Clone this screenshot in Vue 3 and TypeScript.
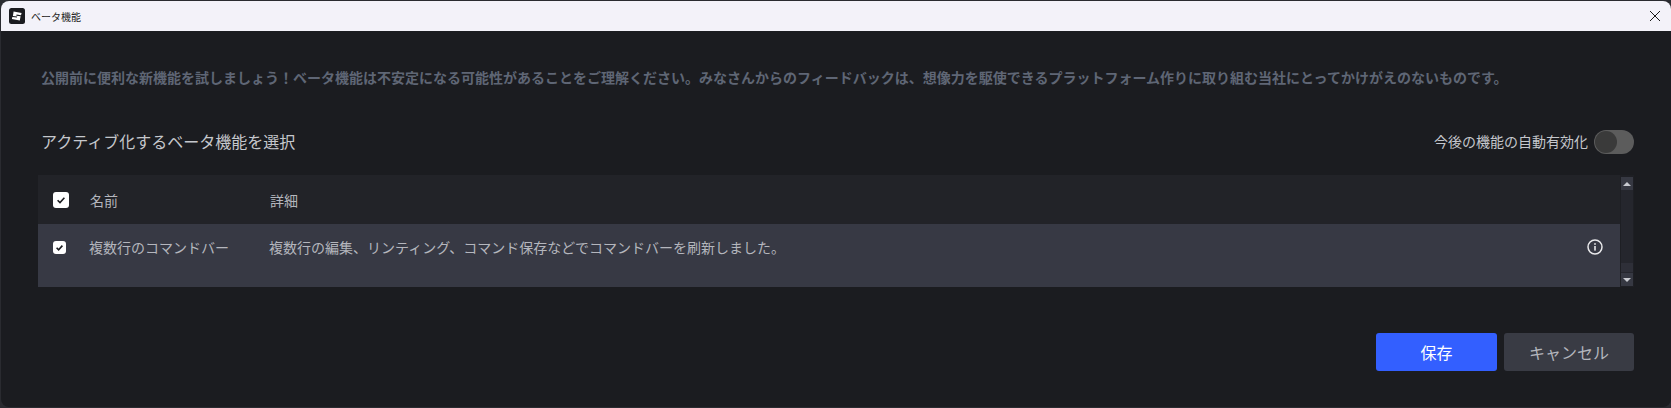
<script setup lang="ts">
const rows = [
  { name: '複数行のコマンドバー', detail: '複数行の編集、リンティング、コマンド保存などでコマンドバーを刷新しました。' },
]
</script>

<template>
  <div class="window">
    <header class="titlebar">
      <svg class="logo" viewBox="0 0 16 16" aria-hidden="true">
        <rect width="16" height="16" rx="2.5" fill="#1b1c20" />
        <path d="M4.6 3.6 12.6 4.9 12 7.2 7.6 6.6 7.3 7.7 11.6 8.3 10.8 12.4 2.9 11.1 3.3 8.9 8 9.6 8.2 8.6 3.9 8Z" fill="#fff" />
      </svg>
      <span class="title">ベータ機能</span>
      <svg class="close" viewBox="0 0 12 12" aria-hidden="true">
        <path d="M1 1 11 11M11 1 1 11" stroke="#1a1a1a" stroke-width="1" fill="none" />
      </svg>
    </header>
    <main class="body">
      <p class="intro">公開前に便利な新機能を試しましょう！ベータ機能は不安定になる可能性があることをご理解ください。みなさんからのフィードバックは、想像力を駆使できるプラットフォーム作りに取り組む当社にとってかけがえのないものです。</p>
      <div class="headline">
        <h2>アクティブ化するベータ機能を選択</h2>
        <div class="auto">
          <span>今後の機能の自動有効化</span>
          <span class="toggle"><span class="knob"></span></span>
        </div>
      </div>
      <div class="table">
        <div class="grid">
          <div class="row head">
            <span class="check big">
              <svg viewBox="0 0 16 16"><path d="M4.6 8.2 7 10.6 11.4 5.8" /></svg>
            </span>
            <span class="name">名前</span>
            <span class="detail">詳細</span>
          </div>
          <div v-for="r in rows" :key="r.name" class="row item">
            <span class="check">
              <svg viewBox="0 0 13 13"><path d="M3.6 6.8 5.6 8.8 9.4 4.6" /></svg>
            </span>
            <span class="name">{{ r.name }}</span>
            <span class="detail">{{ r.detail }}</span>
            <svg class="info" viewBox="0 0 16 16" aria-hidden="true">
              <circle cx="8" cy="8" r="7" fill="none" stroke="#e8e8ea" stroke-width="1.5" />
              <rect x="7.2" y="7" width="1.6" height="4.6" fill="#e8e8ea" />
              <rect x="7.2" y="4.2" width="1.6" height="1.6" fill="#e8e8ea" />
            </svg>
          </div>
        </div>
        <div class="scroll">
          <span class="arrow"><i class="up"></i></span>
          <span class="track"></span>
          <span class="thumb"></span>
          <span class="arrow"><i class="down"></i></span>
        </div>
      </div>
      <div class="actions">
        <button class="btn primary">保存</button>
        <button class="btn secondary">キャンセル</button>
      </div>
    </main>
  </div>
</template>

<style>
html, body { margin: 0; background: #2a2b30; }
</style>

<style scoped>
.window {
  width: 1670px;
  height: 406px;
  margin-top: 1px;
  margin-left: 1px;
  background: #1b1c20;
  border-radius: 8px;
  overflow: hidden;
  display: flex;
  flex-direction: column;
  font-family: "Noto Sans CJK JP", "Liberation Sans", sans-serif;
}
.titlebar {
  flex: 0 0 30px;
  background: #f3f2f9;
  display: flex;
  align-items: center;
  padding: 0 9px 0 8px;
  gap: 6px;
}
.logo { width: 16px; height: 16px; }
.title { font-size: 10px; color: #222; }
.close { width: 12px; height: 12px; margin-left: auto; margin-right: 1px; }
.body {
  flex: 1;
  padding: 0 37px 0 37px;
  display: flex;
  flex-direction: column;
}
.intro {
  margin: 37px 0 0 3px;
  font-size: 14px;
  line-height: 18px;
  font-weight: 700;
  color: #5f6675;
  white-space: nowrap;
}
.headline {
  margin-top: 37px;
  height: 38px;
  display: flex;
  align-items: center;
  justify-content: space-between;
}
.headline h2 {
  margin: -2px 0 0 3px;
  font-size: 16px;
  font-weight: 400;
  color: #c5c7cc;
}
.auto { display: flex; align-items: center; gap: 6px; font-size: 14px; color: #c5c7cc; }
.auto > span:first-child { margin-top: -2px; }
.toggle {
  width: 40px;
  height: 24px;
  border-radius: 12px;
  background: #5c5c5c;
  display: flex;
  align-items: center;
  padding-left: 1px;
  box-sizing: border-box;
}
.knob { width: 22px; height: 22px; border-radius: 50%; background: #3a3a3a; }
.table {
  margin-top: 14px;
  height: 112px;
  display: flex;
  background: #1e1f24;
}
.grid { flex: 1; display: flex; flex-direction: column; }
.row { display: flex; color: #b4b6bd; font-size: 14px; position: relative; }
.head { height: 49px; align-items: center; background: #222328; }
.item { height: 63px; background: #373944; padding-top: 13px; box-sizing: border-box; align-items: flex-start; line-height: 20px; }
.check {
  width: 13px;
  height: 13px;
  margin: 4px 23px 0 15px;
  background: #fff;
  border-radius: 3px;
  display: block;
}
.check.big { width: 16px; height: 16px; margin-top: 0; margin-right: 21px; }
.check svg { display: block; width: 100%; height: 100%; }
.check path { fill: none; stroke: #1b1c20; stroke-width: 1.6; }
.name { width: 180px; white-space: nowrap; }
.detail { white-space: nowrap; }
.info { position: absolute; right: 17px; top: 15px; width: 16px; height: 16px; }
.scroll {
  flex: 0 0 12px;
  margin: 2px 1px 1px 1px;
  display: flex;
  flex-direction: column;
  background: #25262d;
}
.arrow { flex: 0 0 13px; background: #363842; display: flex; align-items: center; justify-content: center; }
.track { flex: 1; }
.thumb { flex: 0 0 9px; margin-bottom: 1px; background: #2e2f38; }
.up, .down { display: block; width: 0; height: 0; border-left: 4px solid transparent; border-right: 4px solid transparent; }
.up { border-bottom: 4px solid #c8cad0; }
.down { border-top: 4px solid #c8cad0; }
.actions { margin-top: 46px; display: flex; justify-content: flex-end; gap: 7px; }
.btn { height: 38px; border: 0; border-radius: 3px; font: inherit; font-size: 16px; padding: 0; }
.primary { width: 121px; background: #335fff; color: #fff; }
.secondary { width: 130px; background: #393b44; color: #b4b6bd; }
</style>
